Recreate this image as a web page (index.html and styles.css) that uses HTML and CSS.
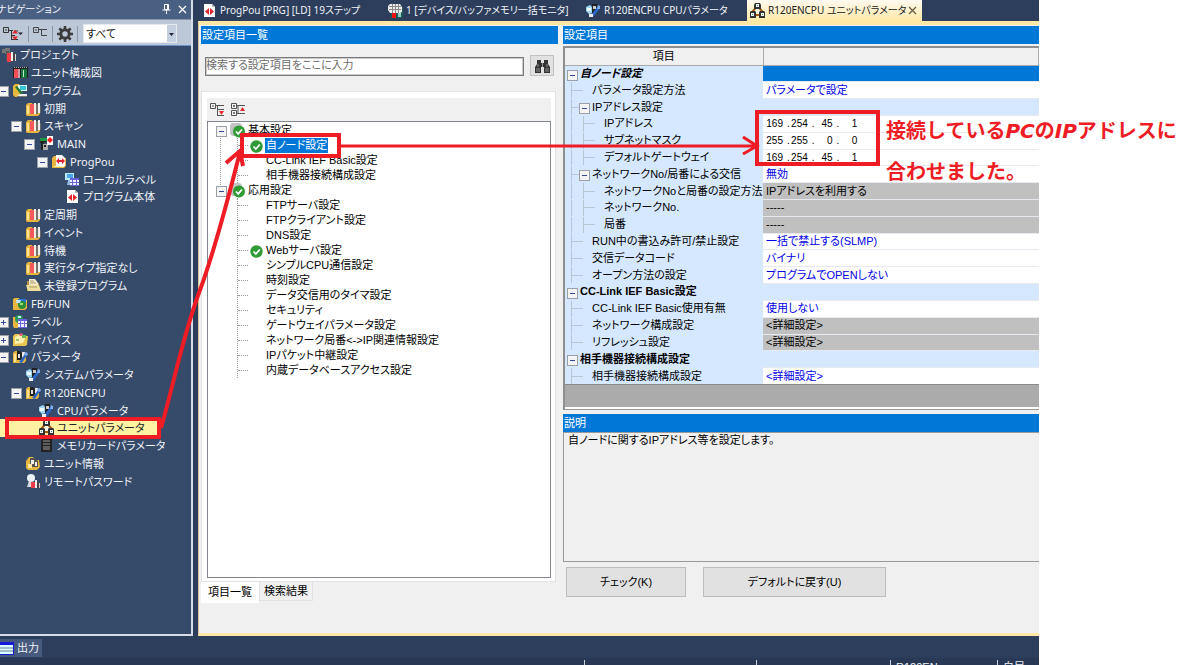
FILE: index.html
```html
<!DOCTYPE html>
<html lang="ja">
<head>
<meta charset="utf-8">
<title>R120ENCPU ユニットパラメータ</title>
<link rel="stylesheet" href="styles.css">
</head>
<body>
<svg class="defs" aria-hidden="true">
  <symbol id="i-project" viewBox="0 0 15 15"><path d="M0 2h5v4H0zM3 1h5v6H3z" fill="#777"/><path d="M4 4h3v9H4z" fill="#555"/><path d="M5 6h4v9H5z" fill="#f33a45"/><path d="M9 5h2v9H9z" fill="#eee"/><path d="M11 6h2v8h-2z" fill="#444"/><path d="M13 7h1v7h-1z" fill="#ddd"/></symbol>
  <symbol id="i-unit" viewBox="0 0 15 15"><path d="M0 2h15v11H0z" fill="#222"/><path d="M1 4h4v9H1z" fill="#f4505a"/><path d="M5 4h2v9H5z" fill="#c9a"/><path d="M8 4h6v9H8z" fill="#16753a"/><path d="M10 5h1v7h-1z" fill="#bfe8c8"/><path d="M1 2.500h13" stroke="#aaa" stroke-dasharray="1"/></symbol>
  <symbol id="i-prog" viewBox="0 0 15 15"><path d="M0 3l2-2h4l1 2v11H2l-2-2z" fill="#e9b83a"/><path d="M5 2h9v6H5z" fill="#dff"/><path d="M7 3h6v4H7z" fill="#35c5d8"/><path d="M2 4l2-1 6 7-2 2z" fill="#287a35"/><path d="M7 11h7v2H4z" fill="#eee"/><path d="M4 13h10v1H4z" fill="#777"/></symbol>
  <symbol id="i-scan" viewBox="0 0 15 15"><path d="M0 4l2-2h4l1 2h7v9l-2 2H1l-1-1z" fill="#e6b63e"/><path d="M1 5h2v8H1z" fill="#ffe497"/><path d="M4 3h4v10H4z" fill="#f45a5a"/><path d="M8 2h2v11H8z" fill="#f1eee4"/><path d="M10 3h2v10h-2z" fill="#77726a"/><path d="M12 2h2v10h-2z" fill="#eee"/><path d="M14 5h1v7h-1z" fill="#666"/></symbol>
  <symbol id="i-main" viewBox="0 0 15 15"><path d="M1 3h7v3H5v8H2V7H1z" fill="#222"/><path d="M1 2h7v3H1z" fill="#1b9a42"/><path d="M4 8h5v6H4z" fill="#aaa"/><path d="M5 9h2v2H5z" fill="#222"/><path d="M8 0h6v9H8z" fill="#fff"/><path d="M8 4l3-3v6zM14 4l-3-3v6z" fill="#e22"/></symbol>
  <symbol id="i-pou" viewBox="0 0 15 15"><path d="M0 4l2-2h4l1 2h7v8l-2 2H0z" fill="#e6b63e"/><path d="M4 1h6l3 3v8H4z" fill="#fff"/><path d="M4 7l3-3v2h3V4l3 3-3 3V8H7v2z" fill="#e3262c"/><path d="M2 12h10v1H2z" fill="#fff0b5"/></symbol>
  <symbol id="i-local" viewBox="0 0 15 15"><path d="M0 1h9v7H0z" fill="#b9eaff"/><path d="M2 2h6v4H2z" fill="#4aa5e8"/><path d="M3 8h5v5H2z" fill="#8fbce0"/><path d="M5 6h9v8H5z" fill="#eef"/><path d="M5 6h9v2H5zM7 6h1v8H7zM11 6h1v8h-1zM5 10h9v1H5zM5 13h9v1H5z" fill="#6a62d8"/></symbol>
  <symbol id="i-body" viewBox="0 0 15 15"><path d="M2 1h8l3 3v10H2z" fill="#fff"/><path d="M10 1v3h3z" fill="#bbb"/><path d="M3 8.500L7 5v7zM12 8.500L8 5v7z" fill="#e3262c"/></symbol>
  <symbol id="i-docs" viewBox="0 0 15 15"><path d="M1 3h6l1 2h5v8H1z" fill="#b9913c"/><path d="M3 1h6l3 4v4H3z" fill="#f5edd0"/><path d="M0 7h13l2 6H2z" fill="#efdf9c"/><path d="M4 3h4M4 5h6M3 9h8" stroke="#a99a68"/></symbol>
  <symbol id="i-fb" viewBox="0 0 15 15"><path d="M0 3l2-1h4l1 2h7v8l-2 2H0z" fill="#e6b63e"/><path d="M5 3h8v5H5z" fill="#2a75d6"/><circle cx="9" cy="9" r="4" fill="#2e8f36"/><path d="M3 4h5l-1 3H3z" fill="#bfe3ff"/><path d="M7 7h3v2H7z" fill="#9be07c"/></symbol>
  <symbol id="i-glabel" viewBox="0 0 15 15"><path d="M0 3h4l1 2v9H1l-1-2z" fill="#e6b63e"/><circle cx="6" cy="5" r="4" fill="#2e9a5a"/><path d="M5 2h3v2H5z" fill="#b9f0ff"/><path d="M5 5h9v9H5z" fill="#eef"/><path d="M5 5h9v2H5zM7 5h1v9H7zM11 5h1v9h-1zM5 9h9v1H5zM5 13h9v1H5z" fill="#6a62d8"/></symbol>
  <symbol id="i-device" viewBox="0 0 15 15"><path d="M0 4l2-2h4l1 2h8l-1 9-2 1H0z" fill="#e9c650"/><path d="M2 5l6-3 5 2-3 7-8 1z" fill="#fbf0b0"/><path d="M6 2l3-1 1 3H7z" fill="#e65b70"/><path d="M9 3h4v3H9z" fill="#68b858"/><path d="M3 7h3v2H3z" fill="#9dc46c"/></symbol>
  <symbol id="i-param" viewBox="0 0 15 15"><path d="M0 4l2-2h4l1 2h6v8l-2 2H0z" fill="#e6b63e"/><path d="M1 5h2v8H1z" fill="#ffe497"/><path d="M4 2h3l2 2v7H4z" fill="#222"/><path d="M5 5h2v4H5z" fill="#ddd"/><path d="M9 3h3v5H9z" fill="#e9e9e9"/><path d="M12 5l2 1-5 8-3-1z" fill="#2f69c7"/><path d="M11 4l3-1 1 3-2 1z" fill="#79a9ee"/></symbol>
  <symbol id="i-cpu" viewBox="0 0 15 15"><path d="M0 4l4-2 3 3v5l-4 1-3-3z" fill="#9fd6f5"/><path d="M1 5h4v3H1z" fill="#eefaff"/><path d="M6 1h5v9H6z" fill="#222"/><path d="M7 3h3v3H7z" fill="#ccc"/><path d="M11 4l3-1-2 5-5 6-3-1 5-6z" fill="#2c66c9"/><path d="M12 2l2 1v3h-3z" fill="#7cb0f0"/><path d="M3 11h4v3H3z" fill="#eee"/></symbol>
  <symbol id="i-uparam" viewBox="0 0 15 15"><path d="M7.500 3L3 8v4h9V8z" fill="#fffbe8" stroke="#a35a12" stroke-width="2"/><path d="M5 0h5l1 2v4H4V2zM0 9l1-1h4l1 1v6H0zM9 9l1-1h4l1 1v6H9z" fill="#333"/><path d="M6 1h3v3H6zM1 10h3v3H1zM11 10h3v3h-3z" fill="#f4f4f4"/><path d="M7 2h1v1H7zM2 11h1v1H2zM12 11h1v1h-1z" fill="#2a8"/></symbol>
  <symbol id="i-mem" viewBox="0 0 15 15"><path d="M3 1h10v13H2V3z" fill="#222"/><path d="M4 3h7M4 6h7M4 9h7M4 11h7" stroke="#999"/></symbol>
  <symbol id="i-uinfo" viewBox="0 0 15 15"><path d="M0 5l3-4h4l2 3h4l1 7-3 3H2l-2-2z" fill="#e6b63e"/><path d="M4 2h4l4 3v6H4z" fill="#555"/><path d="M5 4h3v4H5zM9 6h2v4H9z" fill="#eee"/><path d="M2 8h4v4H2z" fill="#ffe7a0"/></symbol>
  <symbol id="i-remote" viewBox="0 0 15 15"><circle cx="5" cy="4" r="4" fill="#e9f2f4"/><path d="M3 7h3v6H1z" fill="#d5dde0"/><path d="M5 8h4v6H5z" fill="#ee3c48"/><path d="M9 6h2v8H9z" fill="#eee"/><path d="M11 8h2v6h-2z" fill="#444"/><path d="M13 9h1v5h-1z" fill="#ccc"/></symbol>
  <symbol id="i-monitor" viewBox="0 0 15 15"><path d="M3 10h12v5H3zM12 4h3v8h-3z" fill="#1f5d52"/><path d="M2 1h10l2 3v5l-2 1H2L0 7V3z" fill="#eee"/><path d="M1 3.500h12M1 6.500h12M4.500 1v9M7.500 1v9M10.500 1v9" stroke="#888"/><path d="M4 10h4v5H4z" fill="#e11"/><path d="M10 10h3v4h-3z" fill="#9cc"/></symbol>
  <symbol id="i-check" viewBox="0 0 15 15"><circle cx="7.500" cy="7.500" r="6.200" fill="#2f9b35"/><path d="M4.500 7.500l2.300 2.500 4-4.500" fill="none" stroke="#fff" stroke-width="1.800"/></symbol>
  <symbol id="i-group" viewBox="0 0 15 15"><path d="M2 0h8l2 2v9l-2 2H2L0 11V2z" fill="#c4c4c4"/><circle cx="9" cy="8.500" r="6" fill="#2f9b35"/><path d="M6 8.500l2.200 2.300L12 6.500" fill="none" stroke="#fff" stroke-width="1.800"/></symbol>
  <symbol id="i-collapse" viewBox="0 0 15 15"><path d="M.5 1.500h5v5h-5zM2 4h2M6 3.500h8M7.500 4v10M8 7.500h6M8 13.500h6" fill="none" stroke="#555"/><path d="M9 9h5l-2.500 4z" fill="#e3262c"/></symbol>
  <symbol id="i-expand" viewBox="0 0 15 15"><path d="M.5 1.500h5v5h-5zM.5 8.500h5v5h-5zM2 4h2M3 3v2M2 11h2M3 10v2M6 3.500h8M6 11.500h8M7 3.500v8" fill="none" stroke="#555"/><path d="M9 9h5l-2.500-4z" fill="#e3262c"/></symbol>
</svg>

<div class="app">
  <div class="work">
    <nav class="nav" aria-label="ナビゲーション">
      <div class="nav-title"><span class="nav-name">ナビゲーション</span>
        <button aria-label="固定"><svg width="9" height="11" viewBox="0 0 9 11"><path d="M2.500.5h4v5h-4zM5.500 1v4M.5 6h8M4.500 6v4" fill="none" stroke="#fff"/></svg></button>
        <button aria-label="閉じる"><svg width="9" height="9" viewBox="0 0 9 9"><path d="M1 1l7 7M8 1L1 8" stroke="#fff" stroke-width="1.300"/></svg></button>
      </div>
      <div class="nav-tools">
        <button aria-label="すべて展開"><svg width="21" height="16" viewBox="0 0 21 16"><path d="M.5 1.500h5v5h-5zM2 4h2M6 4.500h4M8.500 5v9M9 9.500h3M9 13.500h6M11 5h4" fill="none" stroke="#333"/><path d="M9 7.500h6L12 4zM9 10.500h6L12 14z" fill="#e3262c"/><path d="M15 6.500h5L17.500 9z" fill="#223"/></svg></button>
        <i class="sep"></i>
        <button aria-label="折りたたみ"><svg width="15" height="16" viewBox="0 0 15 16"><path d="M.5 1.500h5v5h-5zM2 4h2M6 3.500h8M8.500 4v5.500H14" fill="none" stroke="#444"/></svg></button>
        <i class="sep"></i>
        <button aria-label="設定"><svg width="16" height="16" viewBox="0 0 16 16"><circle cx="8" cy="8" r="4.200" fill="none" stroke="#3c3c3c" stroke-width="3"/><path d="M8 0v3M8 13v3M0 8h3M13 8h3M2.300 2.300l2.200 2.200M11.500 11.500l2.200 2.200M2.300 13.700l2.200-2.200M11.500 4.500l2.200-2.200" stroke="#3c3c3c" stroke-width="2.600"/></svg></button>
        <i class="sep"></i>
        <span class="filter"><select aria-label="表示対象"><option>すべて</option></select><svg viewBox="0 0 9 18" width="9" height="18"><path d="M2 8h5L4.500 11z" fill="#223"/></svg></span>
      </div>
      <ul class="nav-tree">
        <li class="l0"><svg><use href="#i-project"/></svg>プロジェクト</li>
        <li class="l1"><b></b><svg><use href="#i-unit"/></svg>ユニット構成図</li>
        <li class="l1"><b class="tw"></b><svg><use href="#i-prog"/></svg>プログラム</li>
        <li class="l2"><b></b><svg><use href="#i-scan"/></svg>初期</li>
        <li class="l2"><b class="tw"></b><svg><use href="#i-scan"/></svg>スキャン</li>
        <li class="l3"><b class="tw"></b><svg><use href="#i-main"/></svg>MAIN</li>
        <li class="l4"><b class="tw"></b><svg><use href="#i-pou"/></svg>ProgPou</li>
        <li class="l5"><b></b><svg><use href="#i-local"/></svg>ローカルラベル</li>
        <li class="l5"><b></b><svg><use href="#i-body"/></svg>プログラム本体</li>
        <li class="l2"><b></b><svg><use href="#i-scan"/></svg>定周期</li>
        <li class="l2"><b></b><svg><use href="#i-scan"/></svg>イベント</li>
        <li class="l2"><b></b><svg><use href="#i-scan"/></svg>待機</li>
        <li class="l2"><b></b><svg><use href="#i-scan"/></svg>実行タイプ指定なし</li>
        <li class="l2"><b></b><svg><use href="#i-docs"/></svg>未登録プログラム</li>
        <li class="l1"><b></b><svg><use href="#i-fb"/></svg>FB/FUN</li>
        <li class="l1"><b class="tw plus"></b><svg><use href="#i-glabel"/></svg>ラベル</li>
        <li class="l1"><b class="tw plus"></b><svg><use href="#i-device"/></svg>デバイス</li>
        <li class="l1"><b class="tw"></b><svg><use href="#i-param"/></svg>パラメータ</li>
        <li class="l2"><b></b><svg><use href="#i-cpu"/></svg>システムパラメータ</li>
        <li class="l2"><b class="tw"></b><svg><use href="#i-param"/></svg>R120ENCPU</li>
        <li class="l3"><b></b><svg><use href="#i-cpu"/></svg>CPUパラメータ</li>
        <li class="l3 sel"><b></b><svg><use href="#i-uparam"/></svg>ユニットパラメータ</li>
        <li class="l3"><b></b><svg><use href="#i-mem"/></svg>メモリカードパラメータ</li>
        <li class="l2"><b></b><svg><use href="#i-uinfo"/></svg>ユニット情報</li>
        <li class="l2"><b></b><svg><use href="#i-remote"/></svg>リモートパスワード</li>
      </ul>
    </nav>

    <main class="main">
      <div class="doc-tabs">
        <button class="t1"><svg><use href="#i-body"/></svg>ProgPou [PRG] [LD] 19ステップ</button>
        <button class="t2"><svg><use href="#i-monitor"/></svg>1 [デバイス/バッファメモリ一括モニタ]</button>
        <button class="t3"><svg><use href="#i-cpu"/></svg>R120ENCPU CPUパラメータ</button>
        <button class="on"><svg><use href="#i-uparam"/></svg>R120ENCPU ユニットパラメータ<span class="x"><svg viewBox="0 0 9 9"><path d="M1 1l7 7M8 1L1 8" stroke="#665c45" stroke-width="1.300"/></svg></span></button>
      </div>
      <div class="doc">
        <section class="list-pane">
          <h2>設定項目一覧</h2>
          <div class="search">
            <input type="text" aria-label="検索" placeholder="検索する設定項目をここに入力">
            <button aria-label="検索"><svg width="17" height="16" viewBox="0 0 17 16"><path d="M3 2h4v3h3V2h4v4l2 3v6h-6V9H7v6H1V9l2-3z" fill="#333"/><path d="M4 6v3M13 6v3M3 10v4M5 10v4M12 10v4M14 10v4M8.500 5v4" stroke="#aaa" stroke-width=".8"/></svg></button>
          </div>
          <div class="page">
            <div class="page-tools"><button aria-label="折りたたむ"><svg><use href="#i-collapse"/></svg></button><button aria-label="展開する"><svg><use href="#i-expand"/></svg></button></div>
            <ul class="tree">
              <li class="grp"><i class="pm"></i><svg><use href="#i-group"/></svg>基本設定
                <ul>
                  <li><svg><use href="#i-check"/></svg><mark>自ノード設定</mark></li>
                  <li>CC-Link IEF Basic設定</li>
                  <li>相手機器接続構成設定</li>
                </ul>
              </li>
              <li class="grp"><i class="pm"></i><svg><use href="#i-group"/></svg>応用設定
                <ul>
                  <li>FTPサーバ設定</li>
                  <li>FTPクライアント設定</li>
                  <li>DNS設定</li>
                  <li><svg><use href="#i-check"/></svg>Webサーバ設定</li>
                  <li>シンプルCPU通信設定</li>
                  <li>時刻設定</li>
                  <li>データ交信用のタイマ設定</li>
                  <li>セキュリティ</li>
                  <li>ゲートウェイパラメータ設定</li>
                  <li>ネットワーク局番&lt;-&gt;IP関連情報設定</li>
                  <li>IPパケット中継設定</li>
                  <li>内蔵データベースアクセス設定</li>
                </ul>
              </li>
            </ul>
          </div>
          <div class="page-tabs"><button class="on">項目一覧</button><button>検索結果</button></div>
        </section>

        <section class="detail-pane">
          <h2>設定項目</h2>
          <div class="grid-box">
            <table class="grid">
              <thead><tr><th>項目</th><th></th></tr></thead>
              <tbody>
                <tr class="head own"><td class="a"><i class="pm"></i><em>自ノード設定</em></td><td class="cur"></td></tr>
                <tr><td class="b">パラメータ設定方法</td><td>パラメータで設定</td></tr>
                <tr class="sub"><td class="b"><i class="pm"></i>IPアドレス設定</td><td></td></tr>
                <tr class="ip"><td class="c">IPアドレス</td><td><span>169</span>.<span>254</span>.<span>45</span>.<span>1</span></td></tr>
                <tr class="ip"><td class="c">サブネットマスク</td><td><span>255</span>.<span>255</span>.<span>0</span>.<span>0</span></td></tr>
                <tr class="ip"><td class="c">デフォルトゲートウェイ</td><td><span>169</span>.<span>254</span>.<span>45</span>.<span>1</span></td></tr>
                <tr><td class="b"><i class="pm"></i>ネットワークNo/局番による交信</td><td>無効</td></tr>
                <tr class="off"><td class="c">ネットワークNoと局番の設定方法</td><td>IPアドレスを利用する</td></tr>
                <tr class="off"><td class="c">ネットワークNo.</td><td>-----</td></tr>
                <tr class="off"><td class="c">局番</td><td>-----</td></tr>
                <tr><td class="b">RUN中の書込み許可/禁止設定</td><td>一括で禁止する(SLMP)</td></tr>
                <tr><td class="b">交信データコード</td><td>バイナリ</td></tr>
                <tr><td class="b">オープン方法の設定</td><td>プログラムでOPENしない</td></tr>
                <tr class="head"><td class="a"><i class="pm"></i>CC-Link IEF Basic設定</td><td></td></tr>
                <tr><td class="b">CC-Link IEF Basic使用有無</td><td>使用しない</td></tr>
                <tr class="off"><td class="b">ネットワーク構成設定</td><td>&lt;詳細設定&gt;</td></tr>
                <tr class="off"><td class="b">リフレッシュ設定</td><td>&lt;詳細設定&gt;</td></tr>
                <tr class="head"><td class="a"><i class="pm"></i>相手機器接続構成設定</td><td></td></tr>
                <tr><td class="b">相手機器接続構成設定</td><td>&lt;詳細設定&gt;</td></tr>
              </tbody>
            </table>
          </div>
          <h2 class="desc-title">説明</h2>
          <p class="desc">自ノードに関するIPアドレス等を設定します。</p>
          <div class="actions"><button class="check">チェック(K)</button><button class="reset">デフォルトに戻す(U)</button></div>
        </section>
      </div>
    </main>
  </div>

  <div class="dock"><button><svg width="14" height="13" viewBox="0 0 14 13"><path d="M0 0h14v13H0z" fill="#1818d8"/><path d="M0 3h13v9H0z" fill="#d8ffff"/><path d="M0 6h13M0 9h13" stroke="#779"/></svg>出力</button></div>
  <footer class="status"><span class="s1"></span><span class="s2"></span><span class="s3">R120EN</span><span class="s4">自局</span></footer>
</div>

<aside class="note">接続している<em>PC</em>の<em>IP</em>アドレスに<br>合わせました。</aside>

<svg class="marks" width="1200" height="665" viewBox="0 0 1200 665" aria-hidden="true">
  <g fill="none" stroke="#ee1c25" stroke-width="4">
    <path d="M7 419h152v18H7zM242 135h97v21h-97zM757 112h121v52H757z"/>
    <path d="M161 428C176 375 183 335 200 290C213 255 224 215 240 152M226 163L240 151L243 166"/>
    <path d="M341 146H756M743 137L757 146L743 154" stroke-width="3"/>
  </g>
</svg>
</body>
</html>
```
FILE: styles.css
```css
* { box-sizing: border-box; }
body {
  margin: 0;
  display: flex;
  min-height: 100vh;
  position: relative;
  overflow: hidden;
  background: #fff;
  color: #000;
  font: 11px/15px "Liberation Sans", "Noto Sans CJK JP", sans-serif;
  font-feature-settings: "palt";
  white-space: nowrap;
}
button, input, select { font: inherit; font-feature-settings: inherit; color: inherit; margin: 0; padding: 0; border: 0; background: none; border-radius: 0; }
button { display: inline-flex; align-items: center; white-space: nowrap; }
ul { list-style: none; margin: 0; padding: 0; }
h2 { margin: 0; padding: 0 1px; height: 18px; font-size: 11px; line-height: 18px; font-weight: 400; color: #fff; background: #0078d7; }
svg { flex: none; display: block; }
.defs { position: absolute; width: 0; height: 0; }
.marks { position: absolute; left: 0; top: 0; pointer-events: none; }

.app { flex: 1; min-width: 0; height: 100vh; display: flex; flex-direction: column; background: #2d3e5c; }
.work { flex: 1; min-height: 0; display: flex; gap: 5px; }

/* navigation */
.nav { width: 193px; display: flex; flex-direction: column; color: #f0f3f8; background: #364a6a; border-right: 2px solid #d6dde8; border-bottom: 2px solid #d6dde8; font-family: "Noto Sans", "Noto Sans CJK JP", sans-serif; }
.nav-title { height: 20px; display: flex; align-items: center; gap: 7px; padding-right: 4px; background: #4a6083; border-bottom: 1px solid #8592a8; font-size: 10px; }
.nav-name { flex: 1; margin-left: -3px; }
.nav-tools { height: 26px; display: flex; align-items: center; gap: 4px; padding: 2px 0 0 3px; background: #bcc7d8; border-bottom: 1px solid #6b8ec4; color: #222; }
.sep { width: 1px; height: 16px; background: #8b96a8; }
.filter { display: flex; width: 94px; height: 19px; margin-left: 1px; background: #c4cfdf; border: 1px solid #e4e9f0; }
.filter select { appearance: none; flex: 1; min-width: 0; padding-left: 2px; background: #fff; }
.nav-tree { display: grid; grid-auto-rows: 1fr; height: 444px; padding-left: 0; margin-left: -2px; }
.nav-tree li { display: flex; align-items: center; }
.nav-tree svg { width: 15px; height: 15px; margin-right: 3px; }
.nav-tree b { width: 15px; height: 9px; flex: none; }
.tw::before, .pm::before { content: ""; display: block; width: 9px; height: 9px; border: 1px solid #9a9fa8; background: linear-gradient(#35489a, #35489a) center / 5px 1px no-repeat, #f4f4f4; }
.plus::before { background: linear-gradient(#35489a, #35489a) center / 5px 1px no-repeat, linear-gradient(#35489a, #35489a) center / 1px 5px no-repeat, #f4f4f4; }
.l0 { padding-left: 4px; }
.l2 { padding-left: 13px; }
.l3 { padding-left: 26px; }
.l4 { padding-left: 39px; }
.l5 { padding-left: 52px; }
.sel { width: 160px; background: #fff2a3; color: #222; }

/* documents */
.main { flex: 1; min-width: 0; display: flex; flex-direction: column; }
.doc-tabs { height: 21px; display: flex; align-items: stretch; padding-left: 4px; color: #f0f3f8; font-family: "Noto Sans", "Noto Sans CJK JP", sans-serif; font-size: 10px; }
.doc-tabs svg { width: 15px; height: 15px; margin-right: 3px; }
.t1 { width: 186px; }
.t2 { width: 198px; }
.t3 { width: 161px; }
.doc-tabs .on { width: 175px; padding-left: 3px; color: #222; background: linear-gradient(#fffaf0, #ffe8a6); }
.x { margin-left: auto; }
.doc-tabs .x svg { width: 9px; height: 9px; margin-right: 5px; }
.doc { flex: 1; min-height: 0; display: flex; gap: 5px; background: #f0f0f0; border-top: 4px solid #ffe8a6; border-left: 1px solid #d8c490; border-bottom: 3px solid #ffe8a6; padding: 1px 0 0 2px; }
.list-pane { width: 357px; display: flex; flex-direction: column; }
.search { display: flex; align-items: flex-end; gap: 6px; padding: 11px 4px 15px; }
.search input { flex: 1; min-width: 0; height: 19px; border: 1px solid #7a7a7a; background: #fff; outline: 1px solid #c9c9c9; outline-offset: -2px; padding: 0 0 3px; }
.search input::placeholder { color: #6d6d6d; opacity: 1; }
.search button { width: 24px; height: 21px; justify-content: center; background: #e1e1e1; border: 1px solid #c2c2c2; }
.page { flex: 1; min-height: 0; display: flex; flex-direction: column; margin-right: 2px; padding: 6px 4px 3px 5px; background: #fff; border: 1px solid #e2e2e2; }
.page-tools { height: 23px; display: flex; align-items: center; gap: 6px; padding-left: 3px; background: #f0f0f0; }
.page-tools svg { width: 15px; height: 15px; }
.tree { flex: 1; border: 1px solid #828790; padding: 1px 0 0 8px; background: #fff; }
.tree li { position: relative; line-height: 15px; }
.tree svg { position: absolute; width: 15px; height: 15px; }
.grp { padding-left: 32px; }
.grp > svg { left: 14px; top: 0; }
.grp > .pm { position: absolute; left: 0; top: 3px; }
.tree .grp + .grp::before { content: ""; position: absolute; left: 4px; top: -47px; height: 49px; border-left: 1px dotted #999; }
.tree .grp ul { margin-left: -11px; border-left: 1px dotted #999; }
.tree ul li { padding-left: 28px; height: 15px; }
.tree ul li::before { content: ""; position: absolute; left: 0; top: 7px; width: 10px; border-top: 1px dotted #999; }
.tree ul svg { left: 11px; top: 1px; }
mark { display: inline-block; padding: 0 1px; margin-left: -1px; height: 15px; color: #fff; background: #0078d7; }
.page-tabs { height: 51px; display: flex; align-items: flex-start; }
.page-tabs button { height: 19px; padding: 0 4px; border: 1px solid #e2e2e2; border-top: 0; }
.page-tabs .on { height: 21px; padding: 0 6px; background: #fff; border-color: #fff; }

/* details */
.detail-pane { flex: 1; min-width: 0; display: flex; flex-direction: column; }
.grid-box { height: 364px; margin-top: 2px; border: 2px solid #8f8f8f; border-right: 0; border-bottom: 1px solid #999; background: #ababab; box-shadow: inset 0 -2px #fff; }
.grid { width: 100%; height: 337px; table-layout: fixed; border-collapse: collapse; border-bottom: 1px solid #8a8a8a; }
.grid th { width: 198px; height: 17px; padding: 0; font-weight: 400; line-height: 15px; background: #f0f0f0; border-bottom: 1px solid #aaa; border-right: 1px solid #aaa; }
.grid th + th { width: auto; }
.grid td { padding: 0 0 0 3px; line-height: 15px; color: #0000e6; background: #fff; border-top: 1px solid #e6eaf0; overflow: hidden; }
.grid td:first-child { position: relative; color: #000; background: #d6e8ff; border-top-color: #d6e8ff; }
.grid td.a { padding-left: 15px; font-weight: 700; }
.grid td.b { padding-left: 27px; background: linear-gradient(90deg, #b9c6d6, #b9c6d6) 7px 50% / 11px 1px no-repeat, linear-gradient(#b9c6d6, #b9c6d6) 6px 0 / 1px 100% no-repeat, #d6e8ff; }
.grid td.c { padding-left: 39px; background: linear-gradient(90deg, #b9c6d6, #b9c6d6) 19px 50% / 11px 1px no-repeat, linear-gradient(#b9c6d6, #b9c6d6) 18px 0 / 1px 100% no-repeat, linear-gradient(#b9c6d6, #b9c6d6) 6px 0 / 1px 100% no-repeat, #d6e8ff; }
.grid .pm { position: absolute; left: 2px; top: 4px; }
.grid .b .pm { left: 14px; }
.grid .head td + td, .grid .sub td + td { background: #d6e8ff; }
.grid .head td.cur { background: #0078d7; }
.grid .off td + td { color: #000; background: #c0c0c0; }
.grid .ip td + td { color: #000; padding-left: 2px; font-size: 10px; }
.ip span { display: inline-block; width: 18px; margin-right: 4px; text-align: right; }
.desc-title { margin-top: 4px; }
.desc { flex: 1; margin: 0; padding: 0 4px; border: 1px solid #999; border-right: 0; }
.actions { display: flex; gap: 17px; padding: 5px 3px 36px; }
.actions button { height: 30px; justify-content: center; background: #e1e1e1; border: 1px solid #bdbdbd; }
.check { width: 120px; }
.reset { width: 183px; }

/* bottom bars */
.dock { height: 22px; padding-top: 3px; color: #f0f3f8; }
.dock button { height: 18px; gap: 3px; padding-right: 3px; background: #465a7d; }
.status { height: 7px; display: flex; overflow: hidden; justify-content: flex-end; background: #293955; color: #f0f3f8; }
.status span { margin-top: 2px; border-left: 1px solid #ccd3de; padding-left: 5px; height: 15px; }
.s1 { width: 172px; }
.s2 { width: 134px; }
.s3 { width: 107px; }
.s4 { width: 42px; }

/* remark beside the window, starting over its right edge */
.note { width: 314px; margin-left: -153px; padding-top: 110px; position: relative; color: #ee1c25; font: 700 20px/40px "DejaVu Sans", "Noto Sans CJK JP", sans-serif; font-family: "Noto Sans CJK JP", sans-serif; font-feature-settings: normal; }
.note em { font-family: "DejaVu Sans", sans-serif; }
```
